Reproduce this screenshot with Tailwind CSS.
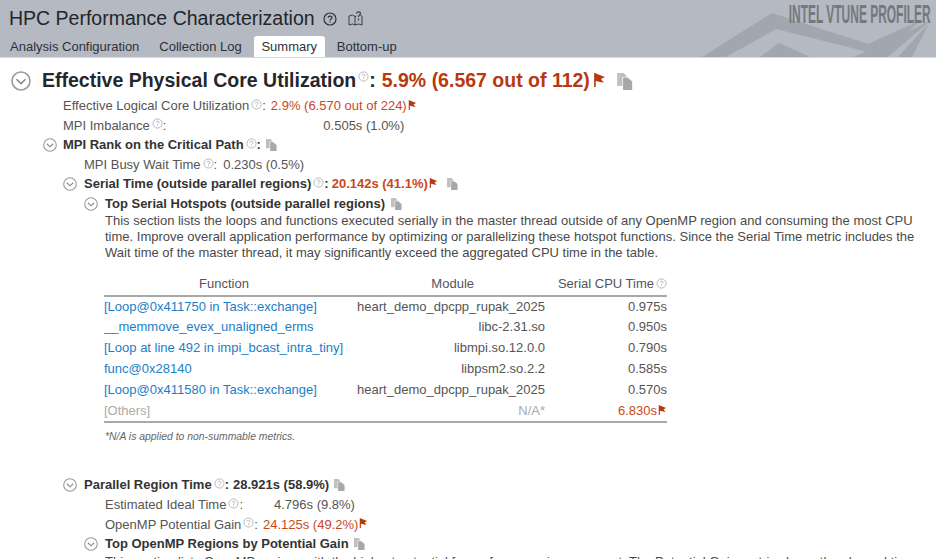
<!DOCTYPE html>
<html lang="en">
<head>
    <meta charset="UTF-8">
    <title>HPC Performance Characterization</title>
    <script src="https://cdn.jsdelivr.net/npm/@tailwindcss/browser@4"></script>
</head>
<body class="w-[936px] h-[559px] overflow-hidden bg-white font-['Liberation_Sans',Arial,sans-serif] text-[13px] text-[#555]">

    <!-- Icons -->
    <svg class="hidden">
        <symbol id="toggle" viewBox="0 0 20 20">
            <circle cx="10" cy="10" r="9" fill="none" stroke="#9a9a9a" stroke-width="1.6"/>
            <path d="M5.5 8.2 10 12.6l4.5-4.4" fill="none" stroke="#8a8a8a" stroke-width="1.6"/>
        </symbol>
        <symbol id="help" viewBox="0 0 12 12">
            <circle cx="6" cy="6" r="5" fill="none" stroke="#b4b4b4" stroke-width="1"/>
            <path d="M4.3 4.8C4.4 3.1 7.8 3.1 7.8 4.8 7.8 6 6 5.9 6 7.3" fill="none" stroke="#b4b4b4" stroke-width="1"/>
            <rect x="5.5" y="8" width="1" height="1" fill="#b4b4b4"/>
        </symbol>
        <symbol id="flag" viewBox="0 0 12 13">
            <path d="M1 0h1.5v13H1zM2.5 .5 11 3.8 7.4 5.6 10 9 2.5 7.4z" fill="#b8390e"/>
        </symbol>
        <symbol id="copy" viewBox="0 0 12 13">
            <path d="M0 0h5l2 2v1H4v7H0z" fill="#c0c0c0"/>
            <path d="M4.5 3.5H8L11.5 6.5V13h-7z" fill="#a8a8a8"/>
        </symbol>
    </svg>

    <!-- Header -->
    <header class="relative h-[57px] bg-[#b5b9c1] overflow-hidden">
        <svg class="absolute left-[690px] top-0" width="246" height="57" viewBox="0 0 246 57">
            <path d="M12 57 82 13 178 44 231 20 190 57H164L178 52 86 29 36 57z" fill="#a2a6ae"/>
            <path d="M70 57 89 43 120 57z" fill="#a2a6ae"/>
            <path d="M164 57 240 21 198 57zM208 57 239 23 222 57z" fill="#a2a6ae"/>
        </svg>
        <div class="absolute right-[5px] top-[1px] font-bold text-[26px] leading-[26px] text-[#74787f] whitespace-nowrap origin-right scale-x-[0.46]">INTEL VTUNE PROFILER</div>

        <div class="relative flex items-center h-[36px] pl-[9px] pt-[1px]">
            <h1 class="text-[19.5px] text-[#22262c]">HPC Performance Characterization</h1>
            <svg class="ml-[8px] w-[14px] h-[14px]" viewBox="0 0 14 14">
                <circle cx="7" cy="7" r="6" fill="none" stroke="#2e3238" stroke-width="1.2"/>
                <path d="M5 5.6C5.1 3.5 9 3.5 9 5.6 9 7 7 6.9 7 8.5" fill="none" stroke="#2e3238" stroke-width="1.2"/>
                <rect x="6.4" y="9.4" width="1.2" height="1.2" fill="#2e3238"/>
            </svg>
            <svg class="ml-[11px] w-[15px] h-[15px]" viewBox="0 0 15 15" fill="none" stroke="#3a3e44" stroke-width="1">
                <path d="M1 5 4.500 4 7 5.500V14L4.500 13 1 14zM7 5.500 8.500 5M7 14l3.500-1 3.500 1V5L12.500 4.500"/>
                <path d="M8.500 2.500C8.700 .3 12.500 .3 12.500 2.500 12.500 4 10.500 4 10.500 6M10.500 7.500v2" stroke-width="1.200"/>
            </svg>
        </div>
        <nav class="relative flex h-[21px] pl-[10px] text-[13px] leading-[21px] text-[#2e3238]">
            <a class="mr-[20px]">Analysis Configuration</a>
            <a class="mr-[12px]">Collection Log</a>
            <a class="w-[71px] mr-[12px] text-center bg-white rounded-t-[3px]">Summary</a>
            <a>Bottom-up</a>
        </nav>
    </header>
    <div class="h-px bg-[#d8d9dc]"></div>

    <main>
        <!-- Top metric -->
        <div class="flex items-center h-[45px] pl-[11px] pt-[1px] text-[19.5px] font-bold text-[#24272b]">
            <svg class="w-[20px] h-[20px] mr-[11px]"><use href="#toggle"/></svg>
            <span>Effective Physical Core Utilization</span>
            <svg class="w-[11px] h-[11px] ml-[2px] mb-[10px]"><use href="#help"/></svg>
            <span>:</span>
            <span class="ml-[6px] text-[#b8390e]">5.9% (6.567 out of 112)</span>
            <svg class="w-[13px] h-[14px] ml-[3px] mb-[2px]"><use href="#flag"/></svg>
            <svg class="w-[16px] h-[17px] ml-[11px]"><use href="#copy"/></svg>
        </div>

        <div class="leading-[19.6px] mt-[-7px]">
            <div class="flex items-center h-[19.6px] pl-[63px]">
                <span>Effective Logical Core Utilization</span>
                <svg class="w-[11px] h-[11px] ml-[2px] mb-[3px]"><use href="#help"/></svg><span>:</span>
                <span class="ml-[5px] text-[#c9481a]">2.9% (6.570 out of 224)</span>
                <svg class="w-[9px] h-[10px] ml-[1px] mb-[2px]"><use href="#flag"/></svg>
            </div>
            <div class="flex items-center h-[19.6px] pl-[63px]">
                <span>MPI Imbalance</span>
                <svg class="w-[11px] h-[11px] ml-[2px] mb-[3px]"><use href="#help"/></svg><span>:</span>
                <span class="ml-[157px]">0.505s (1.0%)</span>
            </div>
            <div class="flex items-center h-[19.6px] pl-[43px] font-bold text-[#333]">
                <svg class="w-[14px] h-[14px] mr-[6px]"><use href="#toggle"/></svg>
                <span>MPI Rank on the Critical Path</span>
                <svg class="w-[11px] h-[11px] ml-[2px] mb-[3px]"><use href="#help"/></svg><span>:</span>
                <svg class="w-[11px] h-[12px] ml-[5px]"><use href="#copy"/></svg>
            </div>
            <div class="flex items-center h-[19.6px] pl-[84px]">
                <span>MPI Busy Wait Time</span>
                <svg class="w-[11px] h-[11px] ml-[2px] mb-[3px]"><use href="#help"/></svg><span>:</span>
                <span class="ml-[6px]">0.230s (0.5%)</span>
            </div>
            <div class="flex items-center h-[19.6px] pl-[63px] font-bold text-[#333]">
                <svg class="w-[14px] h-[14px] mr-[7px]"><use href="#toggle"/></svg>
                <span>Serial Time (outside parallel regions)</span>
                <svg class="w-[11px] h-[11px] ml-[2px] mb-[3px]"><use href="#help"/></svg><span>:</span>
                <span class="ml-[3px] text-[#c9481a]">20.142s (41.1%)</span>
                <svg class="w-[9px] h-[10px] ml-[1px] mb-[2px]"><use href="#flag"/></svg>
                <svg class="w-[11px] h-[12px] ml-[9px]"><use href="#copy"/></svg>
            </div>
            <div class="flex items-center h-[19.6px] pl-[84px] font-bold text-[#333]">
                <svg class="w-[14px] h-[14px] mr-[7px]"><use href="#toggle"/></svg>
                <span>Top Serial Hotspots (outside parallel regions)</span>
                <svg class="w-[11px] h-[12px] ml-[6px]"><use href="#copy"/></svg>
            </div>
        </div>

        <!-- Serial hotspots section -->
        <p class="ml-[105px] w-[820px] mt-[-1px] leading-[16px] text-[#4a4a4a]">This section lists the loops and functions executed serially in the master thread outside of any OpenMP region and consuming the most CPU time. Improve overall application performance by optimizing or parallelizing these hotspot functions. Since the Serial Time metric includes the Wait time of the master thread, it may significantly exceed the aggregated CPU time in the table.</p>

        <table class="ml-[104px] mt-[15px] w-[563px] table-fixed border-b-2 border-[#a8a8a8] leading-[20.8px]">
            <thead class="leading-[16px]">
                <tr class="border-b-2 border-[#a8a8a8] h-[19px]">
                    <th class="w-[240px] font-normal text-center pb-[3px]">Function</th>
                    <th class="w-[201px] font-normal text-right pr-[71px] pb-[3px]">Module</th>
                    <th class="font-normal text-right pb-[3px]">
                        <span class="inline-flex items-center">Serial CPU Time<svg class="w-[11px] h-[11px] ml-[2px]"><use href="#help"/></svg></span>
                    </th>
                </tr>
            </thead>
            <tbody>
                <tr>
                    <td class="text-[#1a7ec8] whitespace-nowrap">[Loop@0x411750 in Task::exchange]</td>
                    <td class="text-right">heart_demo_dpcpp_rupak_2025</td>
                    <td class="text-right">0.975s</td>
                </tr>
                <tr>
                    <td class="text-[#1a7ec8] whitespace-nowrap">__memmove_evex_unaligned_erms</td>
                    <td class="text-right">libc-2.31.so</td>
                    <td class="text-right">0.950s</td>
                </tr>
                <tr>
                    <td class="text-[#1a7ec8] whitespace-nowrap">[Loop at line 492 in impi_bcast_intra_tiny]</td>
                    <td class="text-right">libmpi.so.12.0.0</td>
                    <td class="text-right">0.790s</td>
                </tr>
                <tr>
                    <td class="text-[#1a7ec8] whitespace-nowrap">func@0x28140</td>
                    <td class="text-right">libpsm2.so.2.2</td>
                    <td class="text-right">0.585s</td>
                </tr>
                <tr>
                    <td class="text-[#1a7ec8] whitespace-nowrap">[Loop@0x411580 in Task::exchange]</td>
                    <td class="text-right">heart_demo_dpcpp_rupak_2025</td>
                    <td class="text-right">0.570s</td>
                </tr>
                <tr>
                    <td class="text-[#aaa]">[Others]</td>
                    <td class="text-right text-[#aaa]">N/A*</td>
                    <td class="text-right text-[#c9481a]">
                        <span class="inline-flex items-center">6.830s<svg class="w-[9px] h-[10px] ml-[1px] mb-[2px]"><use href="#flag"/></svg></span>
                    </td>
                </tr>
            </tbody>
        </table>
        <p class="ml-[105px] mt-[8px] text-[10.4px] leading-[12px] italic text-[#666]">*N/A is applied to non-summable metrics.</p>

        <!-- Parallel region -->
        <div class="mt-[32px] leading-[19.6px]">
            <div class="flex items-center h-[19.6px] pl-[63px] font-bold text-[#333]">
                <svg class="w-[14px] h-[14px] mr-[7px]"><use href="#toggle"/></svg>
                <span>Parallel Region Time</span>
                <svg class="w-[11px] h-[11px] ml-[2px] mb-[3px]"><use href="#help"/></svg><span>:</span>
                <span class="ml-[4px]">28.921s (58.9%)</span>
                <svg class="w-[11px] h-[12px] ml-[5px]"><use href="#copy"/></svg>
            </div>
            <div class="flex items-center h-[19.6px] pl-[105px]">
                <span>Estimated Ideal Time</span>
                <svg class="w-[11px] h-[11px] ml-[2px] mb-[3px]"><use href="#help"/></svg><span>:</span>
                <span class="ml-[31px]">4.796s (9.8%)</span>
            </div>
            <div class="flex items-center h-[19.6px] pl-[105px]">
                <span>OpenMP Potential Gain</span>
                <svg class="w-[11px] h-[11px] ml-[2px] mb-[3px]"><use href="#help"/></svg><span>:</span>
                <span class="ml-[5px] text-[#c9481a]">24.125s (49.2%)</span>
                <svg class="w-[9px] h-[10px] ml-[1px] mb-[2px]"><use href="#flag"/></svg>
            </div>
            <div class="flex items-center h-[19.6px] pl-[84px] font-bold text-[#333]">
                <svg class="w-[14px] h-[14px] mr-[7px]"><use href="#toggle"/></svg>
                <span>Top OpenMP Regions by Potential Gain</span>
                <svg class="w-[11px] h-[12px] ml-[5px]"><use href="#copy"/></svg>
            </div>
        </div>
        <p class="ml-[105px] w-[820px] leading-[16px] text-[#4a4a4a] whitespace-nowrap">This section lists OpenMP regions with the highest potential for performance improvement. The Potential Gain metric shows the elapsed time</p>
    </main>
</body>
</html>
